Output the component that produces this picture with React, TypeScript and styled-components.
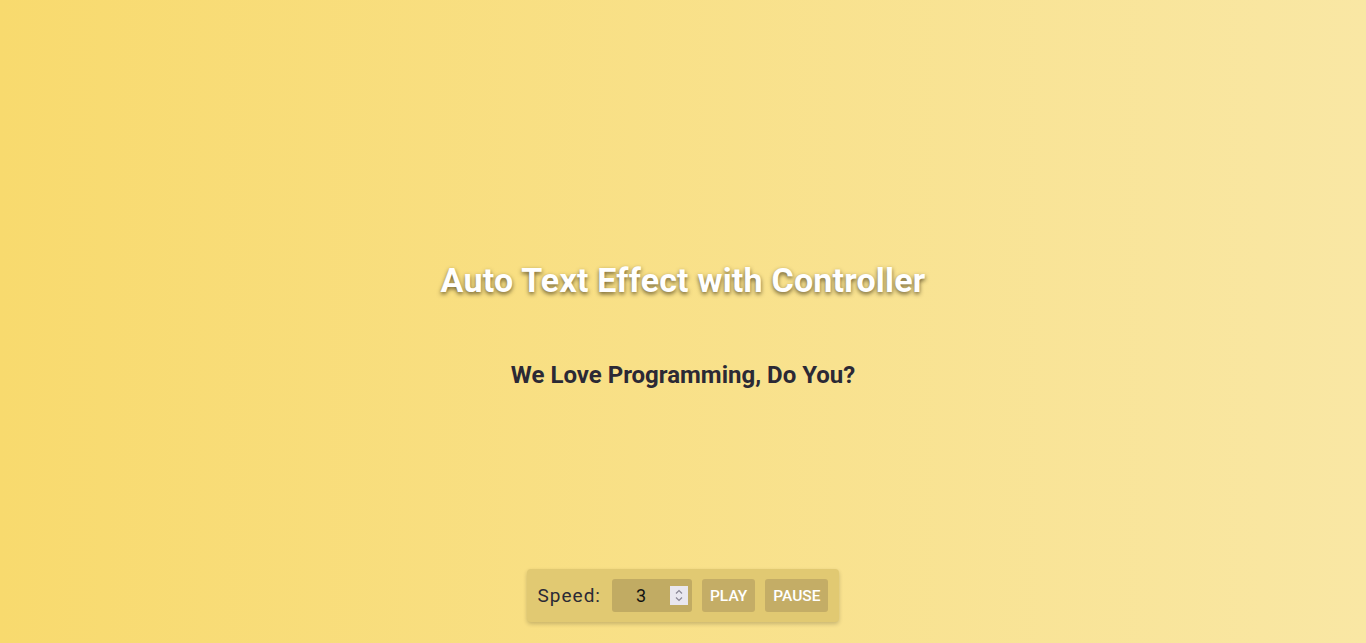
import React, { useState } from "react";
import styled, { createGlobalStyle } from "styled-components";

const Global = createGlobalStyle`
  html, body { margin: 0; padding: 0; min-height: 100%; }
  html { background: linear-gradient(90deg, #f8da6e 0%, #f9e7a4 100%); }
  body { font-family: Roboto, "Liberation Sans", sans-serif; }
`;

const Page = styled.main`
  height: 643px;
  display: flex;
  flex-direction: column;
  align-items: center;
`;

const Title = styled.h1`
  margin: 259px 0 0;
  font-size: 34px;
  line-height: 42px;
  font-weight: 700;
  color: #ffffff;
  letter-spacing: 0.2px;
  text-shadow: 0 2px 4px rgba(60, 50, 20, 0.75);
`;

const Animated = styled.h2`
  margin: 58px 0 0;
  font-size: 24px;
  line-height: 32px;
  font-weight: 700;
  color: #2b2935;
`;

const Controller = styled.div`
  margin-top: auto;
  margin-bottom: 21px;
  display: flex;
  align-items: center;
  gap: 10px;
  padding: 10px 11px;
  background: #e1c972;
  border-radius: 4px;
  box-shadow: 0 2px 4px rgba(0, 0, 0, 0.2);
`;

const Label = styled.label`
  font-size: 19px;
  color: #2b2935;
  letter-spacing: 1px;
  margin-right: 1px;
`;

const InputWrap = styled.div`
  position: relative;
  width: 80px;
  height: 33px;
`;

const NumberInput = styled.input`
  width: 100%;
  height: 100%;
  box-sizing: border-box;
  border: none;
  outline: none;
  border-radius: 3px;
  background: #c1ab63;
  font-family: Roboto, "Liberation Sans", sans-serif;
  font-size: 18px;
  text-align: center;
  color: #111;
  padding: 0 22px 0 0;
  -moz-appearance: textfield;
  &::-webkit-inner-spin-button,
  &::-webkit-outer-spin-button {
    -webkit-appearance: none;
    margin: 0;
  }
`;

const Spinner = styled.div`
  position: absolute;
  right: 4px;
  top: 7px;
  width: 18px;
  height: 19px;
  background: #e9e7ef;
  display: flex;
  flex-direction: column;
  align-items: center;
  justify-content: center;
  pointer-events: none;
`;

const Button = styled.button`
  height: 33px;
  border: none;
  border-radius: 3px;
  background: #c4ad66;
  color: #fff;
  font-family: Roboto, "Liberation Sans", sans-serif;
  font-size: 15.5px;
  font-weight: 500;
  padding: 0 8px;
  cursor: pointer;
`;

export default function App() {
  const [speed, setSpeed] = useState(3);
  return (
    <>
      <Global />
      <Page>
        <Title>Auto Text Effect with Controller</Title>
        <Animated>We Love Programming, Do You?</Animated>
        <Controller>
          <Label htmlFor="speed">Speed:</Label>
          <InputWrap>
            <NumberInput
              id="speed"
              type="number"
              min={1}
              max={10}
              value={speed}
              onChange={(e) => setSpeed(Number(e.target.value))}
            />
            <Spinner>
              <svg width="10" height="15" viewBox="0 0 10 15" fill="none" stroke="#8a8796" strokeWidth="1.2">
                <path d="M2 5.5 L5 2.5 L8 5.5" />
                <path d="M2 9.5 L5 12.5 L8 9.5" />
              </svg>
            </Spinner>
          </InputWrap>
          <Button>PLAY</Button>
          <Button>PAUSE</Button>
        </Controller>
      </Page>
    </>
  );
}
